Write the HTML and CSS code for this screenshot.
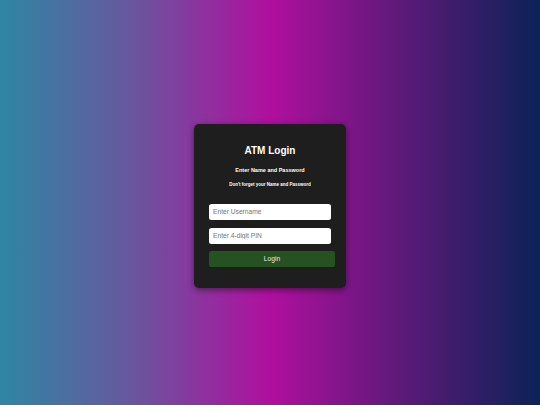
FILE: index.html
```html
<!DOCTYPE html>
<html lang="en">
<head>
<meta charset="utf-8">
<title>ATM Login</title>
<link rel="stylesheet" href="styles.css">
</head>
<body>
<main class="page">
  <form class="card">
    <h1 class="title">ATM Login</h1>
    <p class="subtitle">Enter Name and Password</p>
    <p class="hint">Don't forget your Name and Password</p>
    <input class="field field-user" type="text" placeholder="Enter Username">
    <input class="field field-pin" type="password" placeholder="Enter 4-digit PIN">
    <button class="btn" type="button">Login</button>
  </form>
</main>
</body>
</html>
```

FILE: styles.css
```css
html, body {
  margin: 0;
  padding: 0;
  height: 100%;
}

body {
  font-family: "Liberation Sans", Arial, sans-serif;
  background: linear-gradient(to right, #2e86a3 0%, #6a559e 25%, #b00f9e 50%, #5a1a78 75%, #0c2257 100%);
}

.page {
  box-sizing: border-box;
  height: 100vh;
  padding-top: 7px;
  display: flex;
  align-items: center;
  justify-content: center;
}

.card {
  box-sizing: border-box;
  width: 152px;
  height: 164px;
  padding: 21px 15px 0 15px;
  background: #1e1e1e;
  border-radius: 5px;
  box-shadow: 0 2px 6px rgba(0, 0, 0, 0.45);
  display: flex;
  flex-direction: column;
  align-items: flex-start;
}

.title {
  align-self: stretch;
  margin: 0;
  font-size: 10px;
  line-height: 12px;
  font-weight: bold;
  text-align: center;
  color: #ffffff;
}

.subtitle {
  align-self: stretch;
  margin: 9.6px 0 0 0;
  font-size: 5.5px;
  line-height: 7px;
  font-weight: bold;
  text-align: center;
  color: #ffffff;
}

.hint {
  align-self: stretch;
  margin: 8.4px 0 0 0;
  font-size: 4.5px;
  line-height: 6px;
  font-weight: bold;
  text-align: center;
  color: #ffffff;
}

.field {
  box-sizing: border-box;
  width: 122px;
  height: 16px;
  margin: 0;
  padding: 0 4px;
  border: none;
  border-radius: 2.5px;
  background: #ffffff;
  font-family: "Liberation Sans", Arial, sans-serif;
  font-size: 6.67px;
  color: #222;
  outline: none;
}

.field::placeholder {
  color: #767676;
}

.field-user {
  margin-top: 16px;
}

.field-pin {
  margin-top: 8px;
}

.btn {
  box-sizing: border-box;
  width: 126px;
  height: 16px;
  margin: 7px 0 0 0;
  padding: 0;
  border: none;
  border-radius: 2.5px;
  background: #265222;
  color: #e8e8e8;
  font-family: "Liberation Sans", Arial, sans-serif;
  font-size: 6.67px;
  cursor: pointer;
}
```
